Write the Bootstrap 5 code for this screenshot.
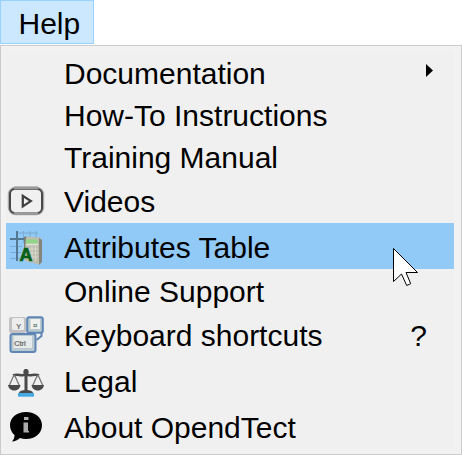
<!DOCTYPE html>
<html lang="en">
<head>
<meta charset="utf-8">
<meta name="viewport" content="width=device-width, initial-scale=1">
<title>Help menu</title>
<link href="https://cdn.jsdelivr.net/npm/bootstrap@5.3.0/dist/css/bootstrap.min.css" rel="stylesheet">
<style>
  body { width: 462px; height: 455px; overflow: hidden; background: #fff; color: #000; font: 30px/42px "Liberation Sans", Arial, sans-serif; }
  .menu-title { width: 94px; height: 44px; padding: 3px 0 0 17.5px; line-height: 40px; background: #cce8ff; border: 1px solid #99d1ff; color: #000; margin-bottom: 1px; }
  .menu-panel { width: 462px; height: 410px; padding: 5px; background: #f2f2f2; border: 1px solid #ccc; }
  .menu-row { width: 448px; height: 42px; background: #f0f0f0; color: #000; white-space: nowrap; }
  .menu-row.tall { height: 46px; }
  .menu-row.current { background: #91c9f7; }
  .icon-slot { width: 58px; height: 100%; flex: none; }
  .icon-slot svg { display: block; }
  .label { padding-top: 3px; line-height: 40px; }
  .hint { padding-top: 3px; padding-right: 27px; line-height: 40px; }
  .arrow { margin: -3px 21px 0 0; }
  .pointer { left: 392px; top: 247px; }
</style>
</head>
<body class="position-relative">
<div class="menu-title">Help</div>
<div class="menu-panel" role="menu">
  <div class="menu-row d-flex align-items-center" role="menuitem"><span class="icon-slot"></span><span class="label">Documentation</span>
    <svg class="arrow ms-auto" width="7" height="13" viewBox="0 0 7 13"><path d="M0 0L7 6.500 0 13z"/></svg></div>
  <div class="menu-row d-flex align-items-center" role="menuitem"><span class="icon-slot"></span><span class="label">How-To Instructions</span></div>
  <div class="menu-row d-flex align-items-center" role="menuitem"><span class="icon-slot"></span><span class="label">Training Manual</span></div>
  <div class="menu-row tall d-flex align-items-center" role="menuitem"><span class="icon-slot">
    <svg width="46" height="46" viewBox="6 177 46 46" fill="none"><rect x="9.500" y="188.500" width="33" height="25" rx="6" stroke="#aaa" stroke-width="3.500"/><rect x="10" y="189" width="32" height="24" rx="5" fill="#f0f0f0" stroke="#484848" stroke-width="2"/><path d="M14 188h24M14 213.500h24" stroke="#999" stroke-width="2.800"/><path d="M22.800 195.800v10.600l8-5.300z" stroke="#404040" stroke-width="2.300"/></svg></span><span class="label">Videos</span></div>
  <div class="menu-row tall current d-flex align-items-center" role="menuitem"><span class="icon-slot">
    <svg width="46" height="46" viewBox="6 223 46 46"><g fill="none"><path d="M23.500 231v12M30 231v8M36 231v7M10 246.500h12M10 252.500h11M10 258.500h10M18 233h20" stroke="#78aad2"/><path d="M17 231v30M10 239h16" stroke="#547792" stroke-width="2"/></g>
      <path d="M24 237l3-1v20l-3-2z" fill="#777c74"/><path d="M26 236.500l14 1 2 2v22l-3 3-15-4z" fill="#bdbdae"/><path d="M39 238l3 2v22l-3 3z" fill="#85857d"/><path d="M26 239.500h11.500v4H26z" fill="#8fd58a"/><path d="M26 244.500h12" stroke="#e1e5d7" stroke-width="1.500"/><path d="M32 246v14M35.500 246v15M29 249h9M29 253h9M29 257h9" stroke="#dbdace" stroke-width=".9"/>
      <text x="19.500" y="260.500" font-family="Liberation Sans, Arial, sans-serif" font-size="18" font-weight="700" fill="#076017" stroke="#076017" stroke-width=".7">A</text></svg></span><span class="label">Attributes Table</span></div>
  <div class="menu-row d-flex align-items-center" role="menuitem"><span class="icon-slot"></span><span class="label">Online Support</span></div>
  <div class="menu-row tall d-flex align-items-center" role="menuitem"><span class="icon-slot">
    <svg width="46" height="46" viewBox="6 311 46 46"><rect x="9" y="317" width="17" height="16" rx="2" fill="#c2c2c2"/><rect x="12" y="318" width="12" height="12" rx="1.500" fill="#ededed"/>
      <rect x="27.200" y="317.200" width="15.600" height="15.600" rx="2" fill="#b9c9cd" stroke="#5d85b5" stroke-width="2"/><rect x="30.500" y="319" width="9.500" height="10" fill="#eef1ee"/>
      <path d="M41.500 333v3l-5 4" fill="none" stroke="#5d85b5" stroke-width="2"/>
      <rect x="10.500" y="334" width="25" height="18" rx="2" fill="#b9c9cd" stroke="#5d85b5" stroke-width="2"/><rect x="13.500" y="336" width="18.500" height="12" fill="#e6eae8"/>
      <g font-family="Liberation Sans, Arial, sans-serif" font-weight="700" fill="#777"><text x="16" y="329" font-size="8">Y</text><text x="33" y="328" font-size="8" fill="#6c8a7d">¤</text><text x="14" y="346" font-size="8" textLength="12">Ctrl</text></g></svg></span><span class="label">Keyboard shortcuts</span><span class="hint ms-auto">?</span></div>
  <div class="menu-row tall d-flex align-items-center" role="menuitem"><span class="icon-slot">
    <svg width="46" height="46" viewBox="6 357 46 46"><g fill="none" stroke="#4a4a4a"><path d="M26 369v24" stroke-width="3"/><path d="M13 375.500c5-2 8 1 13-1 5 2 8-1 13 1" stroke-width="2.500"/><path d="M14 375l-5 11M14.500 375l5 11M37.500 375l-5 11M38 375l5 11" stroke="#777" stroke-width="1.300"/></g><circle cx="26" cy="372" r="2.700" fill="#4a4a4a"/><path d="M8 385h12.500c-.5 3-2.500 5.500-6.200 5.500S8.500 388 8 385zM31.500 385H44c-.5 3-2.500 5.500-6.200 5.500s-5.800-2.500-6.300-5.500z" fill="#4a4a4a"/><path d="M19 393c0-2 3.500-3 7-3s7 1 7 3z" fill="#4a4a4a"/><path d="M18 393h16v3.700H18z" fill="#43aae3"/></svg></span><span class="label">Legal</span></div>
  <div class="menu-row tall d-flex align-items-center" role="menuitem"><span class="icon-slot">
    <svg width="46" height="46" viewBox="6 403 46 46"><path d="M26 412c9.500 0 16 5.500 16 13.300S35.500 439 26 439c-2.300 0-4.300-.4-6-1-2.500 2.300-5 3.300-8 3.500 1.800-2 2.500-4 2.500-6.500-3-2.500-4.500-6-4.500-9.700C10 417.500 16.500 412 26 412z"/><path d="M24 417h4.500v3H24zM23.500 422.500H28v8.500h1v1.500h-5.500z" fill="#aaa"/></svg></span><span class="label">About OpendTect</span></div>
</div>
<svg class="pointer position-absolute" width="28" height="42" viewBox="392 247 28 42"><path d="M393.500 248.500v33l8-7.500 5.200 11.500 4-1.800-4.700-11.200h11.500z" fill="#fff" stroke="#000"/></svg>
<script src="https://cdn.jsdelivr.net/npm/bootstrap@5.3.0/dist/js/bootstrap.bundle.min.js"></script>
</body>
</html>
